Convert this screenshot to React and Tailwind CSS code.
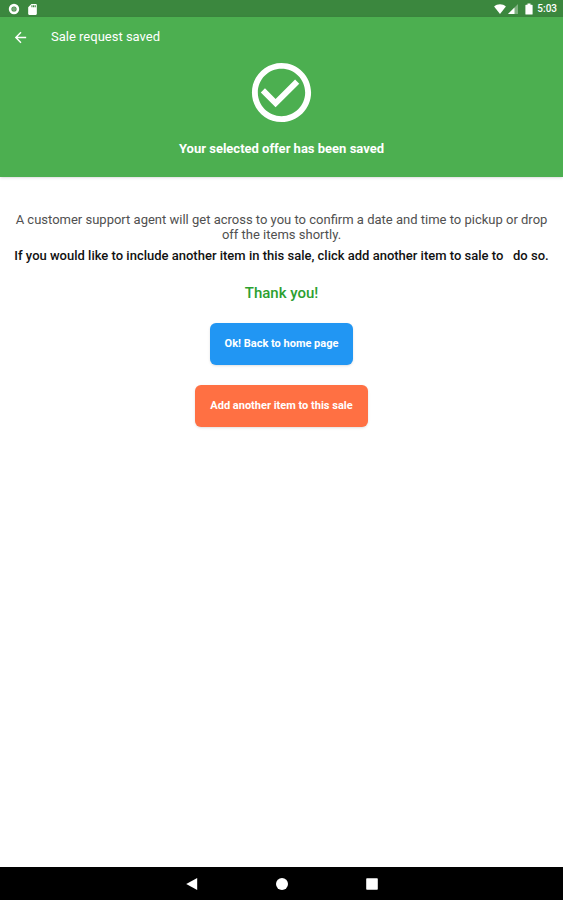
import React from 'react';
import { MdArrowBack, MdSdCard, MdBatteryFull } from 'react-icons/md';

function StatusBar() {
  return (
    <div className="flex h-[17px] items-center justify-between bg-[#3b873e] pt-px pr-[6px] pl-2 text-white">
      <div className="flex items-center gap-[6px]">
        <svg className="h-3 w-3" viewBox="0 0 12 12" fill="none">
          <circle cx="6" cy="6" r="3.9" stroke="currentColor" strokeWidth="2.6" />
          <circle cx="6" cy="6" r="2" fill="currentColor" fillOpacity="0.3" />
        </svg>
        <MdSdCard className="h-[13px] w-[13px]" />
      </div>
      <div className="flex items-center">
        <svg className="h-3 w-3" viewBox="0 0 12 12" fill="currentColor">
          <path d="M6 11 0.1 3.5C3.4 0.6 8.6 0.6 11.9 3.5Z" />
        </svg>
        <svg className="ml-px h-3 w-3" viewBox="0 0 12 12" fill="currentColor">
          <path d="M11 1V11H1Z" fillOpacity="0.35" />
          <path d="M7.5 4.5V11H1Z" />
        </svg>
        {/* battery */}
        <svg className="ml-[6px] h-3 w-2" viewBox="0 0 8 12" fill="currentColor">
          <path d="M2.5 0.5h3v1.2H7a.6.6 0 0 1 .6.6v8.6a.6.6 0 0 1-.6.6H1a.6.6 0 0 1-.6-.6V2.300a.6.6 0 0 1 .6-.6h1.500z" />
        </svg>
        <span className="ml-1 text-[10px] leading-3 font-medium">5:03</span>
      </div>
    </div>
  );
}

function AppBar() {
  return (
    <div className="flex h-10 items-center pl-3 text-white">
      <button type="button" aria-label="Back" className="flex h-4 w-4 items-center justify-center">
        <MdArrowBack className="h-[17px] w-[17px] shrink-0" />
      </button>
      <h1 className="ml-[23px] text-[13px] leading-4">Sale request saved</h1>
    </div>
  );
}

function NavBar() {
  return (
    <nav className="flex h-[33px] items-center justify-center gap-[74px] bg-black text-white">
      <button type="button" aria-label="Back">
        <svg className="h-4 w-4" viewBox="0 0 16 16" fill="currentColor">
          <path d="M2.2 8 13.2 2V14Z" />
        </svg>
      </button>
      <button type="button" aria-label="Home">
        <svg className="h-4 w-4" viewBox="0 0 16 16" fill="currentColor">
          <circle cx="8" cy="8" r="6" />
        </svg>
      </button>
      <button type="button" aria-label="Recent apps">
        <svg className="h-4 w-4" viewBox="0 0 16 16" fill="currentColor">
          <rect x="2.2" y="2.2" width="11.6" height="11.6" rx="0.8" />
        </svg>
      </button>
    </nav>
  );
}

function App() {
  return (
    <div className="flex min-h-screen flex-col bg-white font-[Roboto,sans-serif]">
      <StatusBar />
      <header className="bg-[#4caf50] shadow-sm">
        <AppBar />
        <div className="flex flex-col items-center pb-5 text-white">
          <svg className="h-[71px] w-[71px]" viewBox="0 0 24 24" fill="currentColor">
            <path d="M12 2C6.480 2 2 6.480 2 12s4.480 10 10 10 10-4.480 10-10S17.520 2 12 2zm0 18c-4.410 0-8-3.590-8-8s3.590-8 8-8 8 3.590 8 8-3.590 8-8 8zm4.590-12.420L10 14.170l-3.590-3.580L5 12l5 5 8-8z" />
          </svg>
          <p className="mt-[13px] text-[13px] leading-4 font-bold">Your selected offer has been saved</p>
        </div>
      </header>

      <main className="flex grow flex-col items-center px-3 pt-[35px] text-center">
        <p className="text-[13px] leading-[15px] text-[#505050]">
          A customer support agent will get across to you to confirm a date and time to pickup or drop off the items shortly.
        </p>
        <p className="mt-[6px] text-[13px] leading-[15px] font-medium whitespace-pre-wrap text-[#111111]">
          {'If you would like to include another item in this sale, click add another item to sale to   do so.'}
        </p>
        <p className="mt-5 text-[15px] leading-5 font-medium text-[#2ca02f]">Thank you!</p>
        <button
          type="button"
          className="mt-5 h-[42px] rounded-md bg-[#2196f3] px-[15px] text-[11px] font-bold text-white shadow-sm"
        >
          Ok! Back to home page
        </button>
        <button
          type="button"
          className="mt-5 h-[42px] rounded-md bg-[#ff7043] px-[15px] text-[11px] font-bold text-white shadow-sm"
        >
          Add another item to this sale
        </button>
      </main>

      <NavBar />
    </div>
  );
}

export default App;
